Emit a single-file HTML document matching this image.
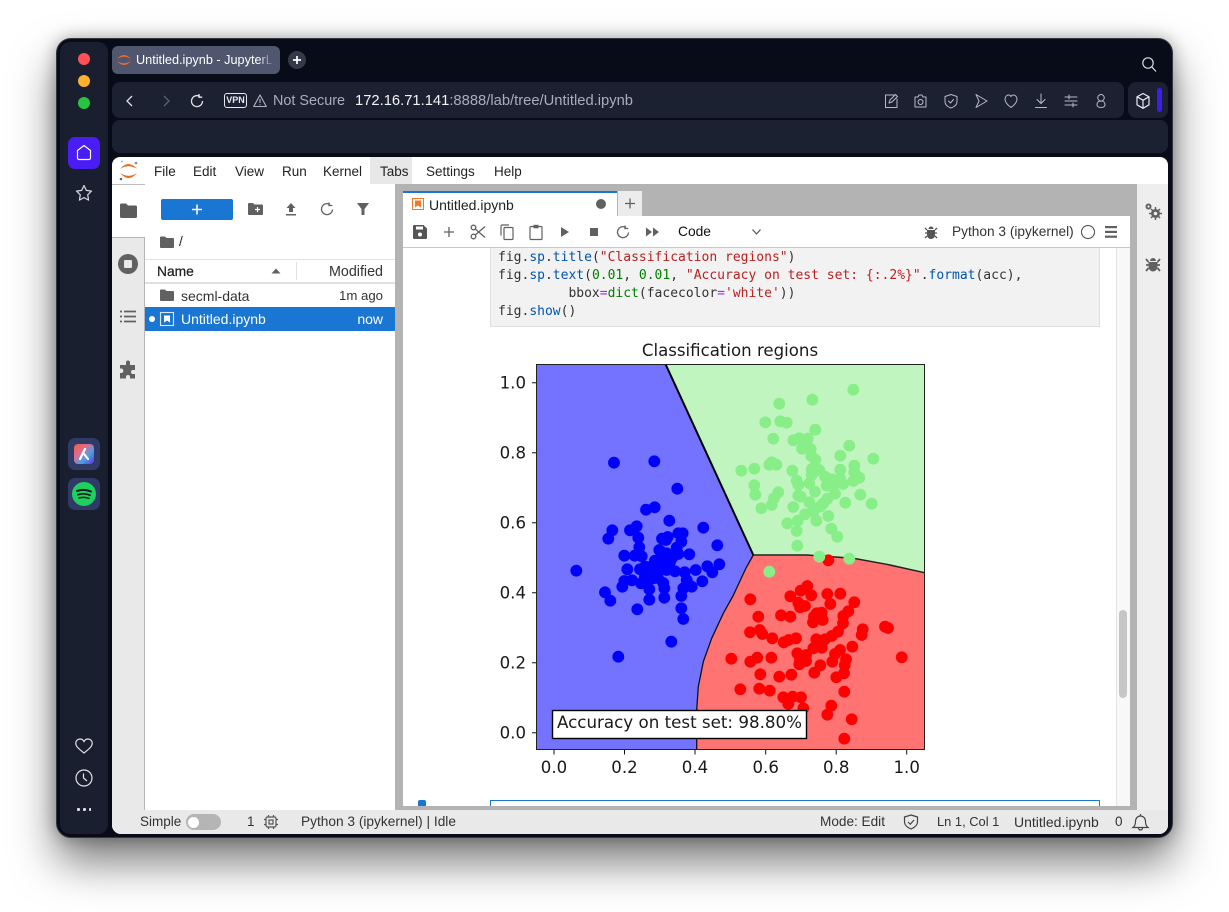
<!DOCTYPE html>
<html><head><meta charset="utf-8"><style>
html,body{margin:0;padding:0;width:1229px;height:912px;overflow:hidden;background:#fff}
*{box-sizing:border-box}
body{font-family:"Liberation Sans",sans-serif;font-size:13.5px;color:#222}
.a{position:absolute}
.t{position:absolute;white-space:nowrap;line-height:16px}
.ic{position:absolute;overflow:visible}
.code{position:absolute;left:498px;font:13px/18px "DejaVu Sans Mono",monospace;color:#333;white-space:pre}
.b{color:#0055aa}.s{color:#ba2121}.n{color:#008000}.p{color:#aa22ff}
</style></head><body>
<div class="a" style="left:56px;top:38px;width:1117px;height:800px;border-radius:15px;background:#080c18;box-shadow:0 24px 44px rgba(0,0,0,.52),0 0 16px rgba(0,0,0,.3);border:1px solid #33363d"></div>
<div class="a" style="left:60px;top:42px;width:48px;height:792px;border-radius:10px;background:#1a1f30"></div>
<div class="a" style="left:78px;top:53px;width:12px;height:12px;border-radius:50%;background:#ff5257"></div>
<div class="a" style="left:78px;top:75px;width:12px;height:12px;border-radius:50%;background:#feb02c"></div>
<div class="a" style="left:78px;top:97px;width:12px;height:12px;border-radius:50%;background:#27c53f"></div>
<div class="a" style="left:68px;top:137px;width:32px;height:32px;border-radius:7px;background:#4a1df5"></div>
<svg class="ic" style="left:68px;top:137px" width="32" height="32" fill="none" stroke="#fff" stroke-width="1.2" stroke-linejoin="round"><path d="M9.5 13.5 16 8.5l6.5 5v7.500a1.500 1.500 0 0 1-1.500 1.500h-10a1.500 1.500 0 0 1-1.500-1.500z"/></svg>
<svg class="ic" style="left:76px;top:185px" width="16" height="16" fill="none" stroke="#d8dae0" stroke-width="1.200" stroke-linejoin="round"><path d="M8 .5l2.300 4.900 5.200.7-3.800 3.700.9 5.300L8 12.600l-4.600 2.500.9-5.300L.5 6.100l5.200-.7z"/></svg>
<div class="a" style="left:68px;top:438px;width:32px;height:32px;border-radius:7px;background:#2f3a66"></div>
<div class="a" style="left:74px;top:444px;width:20px;height:20px;border-radius:4px;background:linear-gradient(135deg,#f0603a 0%,#e06a90 35%,#46a0e8 65%,#6a30d8 100%)"></div>
<svg class="ic" style="left:74px;top:444px" width="20" height="20" fill="none" stroke="#fff" stroke-width="2.200" stroke-linecap="round"><path d="M11 5 6 15M10 10l4 5"/></svg>
<div class="a" style="left:68px;top:478px;width:32px;height:32px;border-radius:7px;background:#2f3a66"></div>
<div class="a" style="left:72px;top:482px;width:24px;height:24px;border-radius:50%;background:#1ed05e"></div>
<svg class="ic" style="left:72px;top:482px" width="24" height="24" fill="none" stroke="#10201a" stroke-linecap="round"><path stroke-width="2" d="M5 9q7-2.500 14 .5"/><path stroke-width="1.700" d="M6 12.700q6-2 12 .5"/><path stroke-width="1.500" d="M7 16q5-1.500 10 .3"/></svg>
<svg class="ic" style="left:75px;top:738px" width="18" height="16" fill="none" stroke="#e2e4e8" stroke-width="1.200"><path d="M9 15C4 11 .8 8.500.8 5.200.8 2.700 2.800 1 5 1c1.700 0 3.200.9 4 2.500C9.800 1.900 11.300 1 13 1c2.200 0 4.200 1.700 4.200 4.200C17.200 8.500 14 11 9 15z"/></svg>
<svg class="ic" style="left:75px;top:769px" width="18" height="18" fill="none" stroke="#e2e4e8" stroke-width="1.200"><circle cx="9" cy="9" r="8"/><path d="M8.500 4.500V9l3.500 3"/></svg>
<div class="a" style="left:77px;top:808px;width:14px;height:3px;background:radial-gradient(circle at 1.500px 1.500px,#dde 1.500px,transparent 1.600px) 0 0/6px 3px"></div>

<div class="a" style="left:112px;top:46px;width:168px;height:28px;border-radius:6px;background:#51566f"></div>
<svg class="ic" style="left:116px;top:52px" width="16" height="16" fill="#ef6c2b"><path d="M1 7Q8-1 15 7Q8 2.500 1 7zM1 9Q8 17 15 9Q8 13.500 1 9z"/></svg>
<div class="t" style="left:136px;top:52px;width:137px;overflow:hidden;color:#fff;font-size:12.700px">Untitled.ipynb - JupyterLab</div>
<div class="a" style="left:258px;top:48px;width:16px;height:24px;background:linear-gradient(90deg,rgba(81,86,111,0),#51566f)"></div>
<div class="a" style="left:288px;top:51px;width:18px;height:18px;border-radius:50%;background:#353a4a"></div>
<svg class="ic" style="left:288px;top:51px" width="18" height="18" stroke="#fff" stroke-width="1.700"><path d="M5 9h8M9 5v8"/></svg>
<svg class="ic" style="left:1141px;top:56px" width="16" height="16" fill="none" stroke="#d8dae0" stroke-width="1.200"><circle cx="7" cy="7" r="5.200"/><path d="M10.800 10.800 15 15.500"/></svg>

<div class="a" style="left:112px;top:82px;width:1012px;height:36px;border-radius:8px;background:#1c2132"></div>
<div class="a" style="left:1128px;top:82px;width:40px;height:36px;border-radius:8px;background:#1c2132"></div>
<div class="a" style="left:112px;top:120px;width:1056px;height:33px;border-radius:8px;background:#1c2132"></div>
<svg class="ic" style="left:122px;top:93px" width="16" height="16" fill="none" stroke="#e0e2e8" stroke-width="1.300"><path d="M10 3 5 8l5 5"/></svg>
<svg class="ic" style="left:158px;top:93px" width="16" height="16" fill="none" stroke="#5a5f70" stroke-width="1.300"><path d="M6 3l5 5-5 5"/></svg>
<svg class="ic" style="left:189px;top:93px" width="16" height="16" fill="none" stroke="#e0e2e8" stroke-width="1.300"><path d="M13.500 8A5.500 5.500 0 1 1 11 3.500M10 1v3.200h3.200"/></svg>
<div class="a" style="left:224px;top:93px;width:23px;height:15px;border:1.200px solid #e8e9ee;border-radius:3px;color:#e8e9ee;font-size:9px;font-weight:bold;text-align:center;line-height:13px">VPN</div>
<svg class="ic" style="left:253px;top:94px" width="14" height="14" fill="none" stroke="#b0b4be" stroke-width="1.100" stroke-linejoin="round"><path d="M7 1 .7 12.500h12.600zM7 5v4M7 10.300v1"/></svg>
<div class="t" style="left:273px;top:93px;color:#a9adb8;font-size:14.400px">Not Secure</div>
<div class="t" style="left:355px;top:93px;color:#a9adb8;font-size:14.750px"><span style="color:#f2f3f5">172.16.71.141</span>:8888/lab/tree/Untitled.ipynb</div>
<svg class="ic" style="left:883px;top:92px" width="228" height="18" fill="none" stroke="#b8bbc6" stroke-width="1" stroke-linejoin="round" stroke-linecap="round">
<path d="M13 3H2.500v12.500H14V7M6 11l1-3 5.500-5.500 2 2L9 10z"/>
<path d="M32 5h3l1-2h3l1 2h3v10H32zM37.500 7.500a2.500 2.500 0 1 0 .1 0z"/>
<path d="M68 2.500l6 2v5c0 3.500-3 5.500-6 6.500-3-1-6-3-6-6.500v-5zM65.500 9l2 2 3-3.500"/>
<path d="M93 2.500 104 9l-11 6.500 3-6.500z"/>
<path d="M128 15.500c-3.500-2.500-6-5-6-8.500 0-2.500 2-4 3.700-4 1 0 1.800.5 2.300 1.500.5-1 1.300-1.500 2.300-1.500 1.700 0 3.700 1.500 3.700 4 0 3.500-2.500 6-6 8.500z"/>
<path d="M158 2v9M154 7.500l4 4 4-4M152.500 15.500h11"/>
<path d="M182 5h12M182 13h12M182 9h12M186 3v4M190 11v4"/>
<path d="M218 9a3 3 0 1 0 0-6.500 3 3 0 0 0 0 6.500zM218 9c-3 0-4 2-4 3.500 0 2 1.500 3 4 3s4-1 4-3C222 11 221 9 218 9z"/>
</svg>
<svg class="ic" style="left:1135px;top:92px" width="16" height="18" fill="none" stroke="#e8e9ee" stroke-width="1.200" stroke-linejoin="round"><path d="M8 1.500l6 3.300v8L8 16.300l-6-3.500v-8zM2 4.800l6 3.400 6-3.400M8 8.200v8"/></svg>
<div class="a" style="left:1157px;top:88px;width:5px;height:24px;border-radius:3px;background:#3d1cf0"></div>

<div class="a" style="left:112px;top:157px;width:1056px;height:677px;border-radius:8px 8px 9px 9px;background:#fff;overflow:hidden">
 <div class="a" style="left:0;top:26.500px;width:1056px;height:1px;background:#bdbdbd"></div>
 <div class="a" style="left:258px;top:0;width:42px;height:27px;background:#e8e8e8"></div>
 <div class="a" style="left:283px;top:27px;width:742px;height:626px;background:#b3b3b3"></div>
 <div class="a" style="left:1025px;top:27px;width:31px;height:626px;background:#eeeeee"></div>
 <div class="a" style="left:0;top:80px;width:33px;height:573px;background:#e9e9e9;border-top:1px solid #b5b5b5;border-right:1px solid #b5b5b5"></div>
 <div class="a" style="left:33px;top:27px;width:250px;height:626px;background:#fff"></div>
 <div class="a" style="left:0;top:653px;width:1056px;height:24px;background:#e9e9e9"></div>
</div>
<svg class="ic" style="left:116px;top:158px" width="24" height="25" fill="#ee6a24"><path d="M4 11Q12.500 1 21 11Q12.500 5.500 4 11zM4 15Q12.500 25 21 15Q12.500 20.500 4 15z"/><circle cx="20" cy="5" r="1.300" fill="#888"/><circle cx="5" cy="21" r="1.300" fill="#666"/><circle cx="6" cy="3.500" r=".9" fill="#999"/></svg>
<div class="t" style="left:154px;top:164px">File</div>
<div class="t" style="left:193px;top:164px">Edit</div>
<div class="t" style="left:235px;top:164px">View</div>
<div class="t" style="left:282px;top:164px">Run</div>
<div class="t" style="left:323px;top:164px">Kernel</div>
<div class="t" style="left:380px;top:164px">Tabs</div>
<div class="t" style="left:426px;top:164px">Settings</div>
<div class="t" style="left:494px;top:164px">Help</div>

<svg class="ic" style="left:120px;top:203px" width="17" height="15" fill="#5c5c5c"><path d="M0 2a1.500 1.500 0 0 1 1.500-1.500h4.500l2 2h7.500A1.500 1.500 0 0 1 17 4v9.500a1.500 1.500 0 0 1-1.500 1.500h-14A1.500 1.500 0 0 1 0 13.500z"/></svg>
<svg class="ic" style="left:118px;top:254px" width="20" height="20"><circle cx="10" cy="10" r="10" fill="#616161"/><rect x="6" y="6" width="8" height="8" rx="1" fill="#e9e9e9"/></svg>
<svg class="ic" style="left:120px;top:309px" width="16" height="15" fill="none" stroke="#616161" stroke-width="1.800"><path d="M4 2.500h12M4 7.500h12M4 12.500h12M0 2.500h2M0 7.500h2M0 12.500h2"/></svg>
<svg class="ic" style="left:119px;top:361px" width="18" height="18" fill="#616161"><path d="M7 1.500a2 2 0 0 1 4 0V4h5v5h-2a2 2 0 0 0 0 4h2v4.500H11V16a2 2 0 0 0-4 0v1.500H1V12h1.500a2.300 2.300 0 0 0 0-4.500H1V4h6z"/></svg>

<div class="a" style="left:161px;top:199px;width:72px;height:21px;border-radius:2px;background:#1976d2"></div>
<svg class="ic" style="left:161px;top:199px" width="72" height="21" stroke="#fff" stroke-width="1.500"><path d="M31 10.500h10M36 5.500v10"/></svg>
<svg class="ic" style="left:248px;top:202px" width="15" height="14" fill="#616161"><path d="M0 2a1 1 0 0 1 1-1h4l1.500 1.500H14a1 1 0 0 1 1 1V12a1 1 0 0 1-1 1H1a1 1 0 0 1-1-1z"/><path d="M7 7.500h5M9.500 5v5" stroke="#fff" stroke-width="1.200"/></svg>
<svg class="ic" style="left:285px;top:202px" width="12" height="14" fill="#616161"><path d="M6 1l4.500 5H8v4H4V6H1.500zM1 12h10v1.500H1z"/></svg>
<svg class="ic" style="left:320px;top:202px" width="14" height="14" fill="none" stroke="#616161" stroke-width="1.300"><path d="M12.500 7.500A5.500 5.500 0 1 1 10 2.500M9 0.500v3h3.300"/></svg>
<svg class="ic" style="left:357px;top:203px" width="12" height="12" fill="#616161"><path d="M0 0h12L7.500 6v6h-3V6z"/></svg>
<svg class="ic" style="left:160px;top:236px" width="14" height="12" fill="#616161"><path d="M0 1.500A1 1 0 0 1 1 .5h4l1.500 1.500H13a1 1 0 0 1 1 1V11a1 1 0 0 1-1 1H1a1 1 0 0 1-1-1z"/></svg>
<div class="t" style="left:179px;top:234px">/</div>
<div class="a" style="left:145px;top:259px;width:250px;height:1px;background:#e0e0e0"></div>
<div class="a" style="left:145px;top:282px;width:250px;height:2px;background:#e0e0e0"></div>
<div class="a" style="left:296px;top:262px;width:1px;height:18px;background:#e0e0e0"></div>
<div class="t" style="left:157px;top:264px;font-size:13.800px;color:#222;-webkit-text-stroke:.25px #222">Name</div>
<svg class="ic" style="left:271px;top:268px" width="10" height="6" fill="#616161"><path d="M5 .5l4.500 5H.5z"/></svg>
<div class="t" style="right:846px;top:264px;color:#333;font-size:14.300px">Modified</div>
<svg class="ic" style="left:160px;top:289px" width="14" height="12" fill="#616161"><path d="M0 1.500A1 1 0 0 1 1 .5h4l1.500 1.500H13a1 1 0 0 1 1 1V11a1 1 0 0 1-1 1H1a1 1 0 0 1-1-1z"/></svg>
<div class="t" style="left:181px;top:288px;color:#333;font-size:14px">secml-data</div>
<div class="t" style="right:846px;top:288px;color:#333;font-size:13.200px">1m ago</div>
<div class="a" style="left:145px;top:307px;width:250px;height:24px;background:#1976d2"></div>
<div class="a" style="left:149px;top:316px;width:6px;height:6px;border-radius:50%;background:#fff"></div>
<svg class="ic" style="left:160px;top:312px" width="14" height="14" fill="none" stroke="#d8e8f8" stroke-width="1.100"><rect x=".5" y=".5" width="13" height="13"/><path d="M4 3.500h6v7L7 8.500l-3 2z" fill="#fff" stroke="none"/></svg>
<div class="t" style="left:181px;top:311px;color:#fff;font-size:14px">Untitled.ipynb</div>
<div class="t" style="right:846px;top:311px;color:#fff;font-size:14px">now</div>

<div class="a" style="left:403px;top:191px;width:214px;height:25px;background:#fff;border-top:2px solid #1976d2"></div>
<svg class="ic" style="left:412px;top:198px" width="12" height="12" fill="none"><rect x=".5" y=".5" width="11" height="11" stroke="#f37726"/><path d="M3 2.500h6v7L6 7.500l-3 2z" fill="#f37726"/></svg>
<div class="t" style="left:429px;top:197px;font-size:14px">Untitled.ipynb</div>
<div class="a" style="left:596px;top:199px;width:10px;height:10px;border-radius:50%;background:#616161"></div>
<div class="a" style="left:618px;top:191px;width:24px;height:25px;background:#ececec"></div>
<svg class="ic" style="left:618px;top:191px" width="24" height="25" stroke="#616161" stroke-width="1.300"><path d="M7 12.500h10M12 7.500v10"/></svg>
<div class="a" style="left:403px;top:216px;width:727px;height:32px;background:#fff;border-bottom:1px solid #c8c8c8"></div>
<svg class="ic" style="left:413px;top:225px" width="14" height="14" fill="#555"><path d="M0 1a1 1 0 0 1 1-1h9.500L14 3.500V13a1 1 0 0 1-1 1H1a1 1 0 0 1-1-1z"/><rect x="3" y="1.500" width="7" height="3" fill="#fff"/><circle cx="7" cy="9.500" r="2" fill="#fff"/></svg>
<svg class="ic" style="left:442px;top:225px" width="14" height="14" stroke="#616161" stroke-width="1.300"><path d="M2 7h10M7 2v10"/></svg>
<svg class="ic" style="left:470px;top:224px" width="16" height="16" fill="none" stroke="#616161" stroke-width="1.300"><circle cx="3.500" cy="3.500" r="2.300"/><circle cx="3.500" cy="12.500" r="2.300"/><path d="M5.300 5 15 13.500M5.300 11 15 2.500"/></svg>
<svg class="ic" style="left:500px;top:224px" width="14" height="16" fill="none" stroke="#616161" stroke-width="1.200"><rect x="4" y="3.500" width="9" height="12" rx="1"/><path d="M1 11.500V2a1 1 0 0 1 1-1h7"/></svg>
<svg class="ic" style="left:529px;top:224px" width="14" height="16" fill="none" stroke="#616161" stroke-width="1.200"><rect x="1" y="2.500" width="12" height="13" rx="1"/><rect x="4.500" y=".8" width="5" height="3.500" fill="#616161" stroke="none"/></svg>
<svg class="ic" style="left:560px;top:226px" width="10" height="12" fill="#616161"><path d="M1 1l8 5-8 5z"/></svg>
<div class="a" style="left:590px;top:228px;width:8px;height:8px;background:#616161"></div>
<svg class="ic" style="left:616px;top:225px" width="14" height="14" fill="none" stroke="#616161" stroke-width="1.300"><path d="M12.500 7.500A5.500 5.500 0 1 1 10 2.500M9 .5v3h3.300"/></svg>
<svg class="ic" style="left:646px;top:227px" width="13" height="10" fill="#616161"><path d="M0 .5l6 4.500-6 4.500zM7 .5l6 4.500-6 4.500z"/></svg>
<div class="t" style="left:678px;top:224px;color:#111;font-size:13.800px">Code</div>
<svg class="ic" style="left:751px;top:228px" width="11" height="8" fill="none" stroke="#555" stroke-width="1.200"><path d="M1.500 1.500 5.500 6l4-4.500"/></svg>
<svg class="ic" style="left:925px;top:225px" width="12" height="14" fill="#555"><path d="M2 5h8v5a4 4 0 0 1-8 0zM3.500 4a2.500 2.500 0 0 1 5 0z"/><path d="M0 3l2 2M12 3l-2 2M0 8h2M10 8h2M0 13l2-2M12 13l-2-2" stroke="#555" stroke-width="1.300"/></svg>
<div class="t" style="left:952px;top:224px;color:#333;font-size:13.700px">Python 3 (ipykernel)</div>
<div class="a" style="left:1081px;top:225px;width:14px;height:14px;border-radius:50%;border:1.200px solid #444"></div>
<svg class="ic" style="left:1105px;top:226px" width="12" height="12" fill="#616161"><rect y="0" width="12" height="2.200"/><rect y="4.800" width="12" height="2.200"/><rect y="9.600" width="12" height="2.200"/></svg>

<div class="a" style="left:403px;top:248px;width:727px;height:558px;background:#fff;overflow:hidden">
 <div class="a" style="left:713px;top:0;width:14px;height:558px;background:#f8f8f8;border-left:1px solid #e4e4e4"></div>
 <div class="a" style="left:716px;top:362px;width:8px;height:88px;border-radius:4px;background:#c6c6c6"></div>
 <div class="a" style="left:87px;top:-2px;width:610px;height:81px;background:#f2f2f2;border:1px solid #dfdfdf"></div>
 <div class="a" style="left:87px;top:552px;width:610px;height:8px;background:#fff;border:1px solid #1976d2"></div>
 <div class="a" style="left:15px;top:552px;width:8px;height:8px;border-radius:2px;background:#1976d2"></div>
</div>
<div class="code" style="top:249px">fig.<span class="b">sp</span>.<span class="b">title</span>(<span class="s">"Classification regions"</span>)</div>
<div class="code" style="top:267px">fig.<span class="b">sp</span>.<span class="b">text</span>(<span class="n">0.01</span>, <span class="n">0.01</span>, <span class="s">"Accuracy on test set: {:.2%}"</span>.<span class="b">format</span>(acc),</div>
<div class="code" style="top:285px">         bbox<span class="p">=</span><span class="n">dict</span>(facecolor<span class="p">=</span><span class="s">'white'</span>))</div>
<div class="code" style="top:303px">fig.<span class="b">show</span>()</div>

<svg class="ic" style="left:0;top:0" width="1229" height="912">
<rect x="536.500" y="364.500" width="388" height="385" fill="#c0f5c0"/>
<path d="M536.500 364.500H665.700L753.300 555 746 568 733 596 723.300 613.300 711.700 638.300 703.300 661.700 698.300 686.700 696.700 710V749.500H536.500z" fill="#7373ff"/>
<path d="M753.300 555H806.700L853.300 558.300 886.700 564.300 924.500 572.700V749.500H696.700V710L698.300 686.700 703.300 661.700 711.700 638.300 723.300 613.300 733 596 746 568z" fill="#ff7373"/>
<path d="M665.700 364.500 753.300 555" fill="none" stroke="#000" stroke-width="2"/>
<path d="M753.300 555H806.700L853.300 558.300 886.700 564.300 924.500 572.700" fill="none" stroke="#222" stroke-width="1.500"/>
<path d="M753.300 555 746 568 733 596 723.300 613.300 711.700 638.300 703.300 661.700 698.300 686.700 696.700 710V749.500" fill="none" stroke="#111" stroke-width="1.300"/>
<g fill="none" stroke-width="11.800" stroke-linecap="round">
<path stroke="#00f" d="M614 462.700h.01M654.300 461.300h.01M677.300 488.700h.01M646 509.700h.01M654.700 507.300h.01M669.300 520.700h.01M703.300 527.700h.01M612.300 530.300h.01M608.300 538.700h.01M630 530.300h.01M636.700 526.300h.01M638.300 537.700h.01M639.300 547.300h.01M624.300 555.700h.01M634.700 555.700h.01M641.700 556.300h.01M662 538.700h.01M667.700 537h.01M666 540h.01M678.300 533.300h.01M682.700 533.300h.01M681.300 541.700h.01M676.700 547.700h.01M717.300 545.300h.01M689.300 554.300h.01M659.300 550h.01M666.700 553.300h.01M678.300 554h.01M655 560.700h.01M627.300 569.300h.01M576.300 570.700h.01M707.300 566.300h.01M719.300 564.300h.01M712.300 572.300h.01M695.700 570h.01M684.700 572.300h.01M675 571.300h.01M645 566.700h.01M640 569.300h.01M666.700 565h.01M660 570h.01M624.300 581h.01M632 580.300h.01M622.300 586.700h.01M605 592.300h.01M610.300 600.700h.01M637.300 609.300h.01M649.300 599.700h.01M664.300 597.700h.01M649.300 589.300h.01M641 583.300h.01M645 576.700h.01M660 550.700h.01M676.700 553.300h.01M666.700 570h.01M702.300 581.300h.01M691.700 586.700h.01M686.700 580h.01M683.300 588.300h.01M681.300 596h.01M681.300 608.300h.01M683.300 619h.01M671.300 641.700h.01M664.300 588.300h.01M663.300 583h.01M653.300 578.300h.01M648.300 580h.01M656.700 570h.01M650 573.300h.01M618.300 656.700h.01M670 562h.01M655 572h.01M645 572h.01M652 566h.01M663 560h.01M672 558h.01M658 578h.01"/>
<path stroke="#f00" d="M828.300 560.300h.01M750.300 599.300h.01M807.300 586h.01M800.700 590.700h.01M790.300 596.300h.01M811.300 595.300h.01M827.300 594h.01M840.300 593.700h.01M830.300 604h.01M854.300 602.300h.01M798.300 602.700h.01M805 606h.01M800 607.300h.01M848.300 611.300h.01M843.300 616h.01M843 623.300h.01M758.300 616.700h.01M781 615.300h.01M790.300 616.700h.01M816.700 613.300h.01M821.700 612.700h.01M814 616.700h.01M822.700 620h.01M813 622.300h.01M862.700 629.300h.01M861.700 635h.01M885 626.700h.01M888 628h.01M750 632.300h.01M759.700 630h.01M762.300 634h.01M772.300 638.300h.01M838 631.700h.01M831.700 636h.01M825 639.300h.01M816.300 639.300h.01M796 638.300h.01M788.700 640h.01M783.700 642.300h.01M852.300 646.700h.01M821.700 647.700h.01M813.300 648.300h.01M816.700 645h.01M840 650h.01M835 654h.01M797.300 653.300h.01M806 655h.01M846 659.300h.01M832.300 661.700h.01M800 660h.01M806 661h.01M799.300 664.300h.01M731.300 658.700h.01M750.300 661.700h.01M757.300 657.700h.01M771.300 657.700h.01M901.700 657.300h.01M820.300 665.300h.01M814.300 672.700h.01M844.700 665h.01M844 673.300h.01M836.300 677.300h.01M760.300 674.300h.01M779.300 676.700h.01M791.300 674.700h.01M740.300 689.300h.01M759.300 688.700h.01M769.700 690.700h.01M844.300 691.700h.01M783.300 697.300h.01M792.700 696.700h.01M801 697.300h.01M788.300 704h.01M803.300 708.300h.01M831.300 705.700h.01M827.300 714.700h.01M851.700 719.300h.01M844.300 738.700h.01"/>
<path stroke="#88ee88" d="M853.300 389.700h.01M812.300 399.700h.01M779.300 403.700h.01M765.300 422.300h.01M780.300 421.300h.01M786.700 422.700h.01M815.300 429.700h.01M773.300 438.700h.01M793.300 440.300h.01M799.300 438.300h.01M807.700 438.700h.01M802 448.700h.01M810.700 449h.01M849.300 445.700h.01M840.300 455.700h.01M873.300 458.700h.01M811.300 456h.01M815.300 459.700h.01M771.700 462.300h.01M769.300 464.700h.01M776.300 464.700h.01M741.300 470.700h.01M754.300 468.700h.01M792.300 470.700h.01M854.300 465.700h.01M840.300 469.700h.01M854.300 472h.01M811.700 469.300h.01M819.300 470h.01M811.700 475h.01M825 476.700h.01M831.700 479.300h.01M840 478.300h.01M859.300 477.700h.01M853.300 481h.01M843 484h.01M826.700 485.700h.01M835 483.300h.01M796.700 480.700h.01M798.300 485h.01M809.300 483.300h.01M754.300 485.300h.01M755.300 494.700h.01M815 491.700h.01M778.300 492.300h.01M774 498.300h.01M771.700 505h.01M798.300 495.700h.01M800.700 496.700h.01M835 493.700h.01M860.300 494.700h.01M827.300 498.700h.01M823.300 503.300h.01M809.300 502.300h.01M845.300 502.700h.01M871.700 503.700h.01M761.300 508.300h.01M793.300 507h.01M820 506.700h.01M828.300 516h.01M805 514.300h.01M797.700 520.700h.01M787.300 523.300h.01M816.300 520.700h.01M813.300 511.700h.01M796.700 531h.01M831.300 528.700h.01M837.300 536.700h.01M797.300 545.700h.01M819.300 556.700h.01M849.300 558.700h.01M769.300 571.700h.01"/>
</g>
<rect x="552.500" y="710.500" width="254" height="28" fill="#fff" stroke="#000" stroke-width="1.400"/>
<rect x="536.500" y="364.500" width="388" height="385" fill="none" stroke="#222" stroke-width="1"/>
<path d="M532 382.700h4.500M532 452.700h4.500M532 522.700h4.500M532 592.700h4.500M532 662.700h4.500M532 732.700h4.500M554 750v4.500M624.500 750v4.500M695 750v4.500M765.700 750v4.500M836.200 750v4.500M906.700 750v4.500" stroke="#111" stroke-width="1"/>
<g font-family="'DejaVu Sans',sans-serif" font-size="16.600" fill="#1a1a1a">
<text x="526" y="388.700" text-anchor="end">1.0</text>
<text x="526" y="458.700" text-anchor="end">0.8</text>
<text x="526" y="528.700" text-anchor="end">0.6</text>
<text x="526" y="598.700" text-anchor="end">0.4</text>
<text x="526" y="668.700" text-anchor="end">0.2</text>
<text x="526" y="738.700" text-anchor="end">0.0</text>
<text x="554" y="773" text-anchor="middle">0.0</text>
<text x="624.500" y="773" text-anchor="middle">0.2</text>
<text x="695" y="773" text-anchor="middle">0.4</text>
<text x="765.700" y="773" text-anchor="middle">0.6</text>
<text x="836.200" y="773" text-anchor="middle">0.8</text>
<text x="906.700" y="773" text-anchor="middle">1.0</text>
<text x="557" y="728" font-size="16.700">Accuracy on test set: 98.80%</text>
<text x="730" y="356" text-anchor="middle" font-size="16.600">Classification regions</text>
</g>
</svg>

<svg class="ic" style="left:1144px;top:202px" width="18" height="18" fill="#616161"><circle cx="4.500" cy="4.500" r="3"/><circle cx="4.500" cy="4.500" r="1.100" fill="#eee"/><circle cx="11.500" cy="11.500" r="4.500"/><path d="M11.500 5v13M5 11.500h13M7 7l9 9M16 7l-9 9" stroke="#616161" stroke-width="1.500"/><circle cx="11.500" cy="11.500" r="1.800" fill="#eee"/></svg>
<svg class="ic" style="left:1146px;top:256px" width="14" height="16" fill="#616161"><path d="M2.500 6h9v5a4.500 4.500 0 0 1-9 0zM4 5a3 3 0 0 1 6 0z"/><path d="M0 3l2.500 3M14 3l-2.500 3M0 9h2.500M11.500 9H14M0 15l2.500-3M14 15l-2.500-3" stroke="#616161" stroke-width="1.800"/></svg>

<div class="t" style="left:140px;top:814px;color:#333">Simple</div>
<div class="a" style="left:186px;top:814px;width:35px;height:16px;border-radius:8px;background:#b5b5b5"></div>
<div class="a" style="left:188px;top:817px;width:11px;height:11px;border-radius:50%;background:#fff"></div>
<div class="t" style="left:247px;top:814px;color:#333">1</div>
<svg class="ic" style="left:264px;top:815px" width="14" height="14" fill="none" stroke="#555" stroke-width="1.200"><rect x="2" y="2" width="10" height="10" rx="1.500"/><rect x="5" y="5" width="4" height="4"/><path d="M4.500 0v2M9.500 0v2M4.500 12v2M9.500 12v2M0 4.500h2M0 9.500h2M12 4.500h2M12 9.500h2"/></svg>
<div class="t" style="left:301px;top:814px;color:#333;font-size:13.700px">Python 3 (ipykernel) | Idle</div>
<div class="t" style="left:820px;top:814px;color:#333;font-size:13.600px">Mode: Edit</div>
<svg class="ic" style="left:903px;top:814px" width="16" height="16" fill="none" stroke="#444" stroke-width="1.200"><path d="M8 1l6.500 2v5c0 3.500-3 5.500-6.500 7C4.500 13.500 1.500 11.500 1.500 8V3zM5 8l2.300 2.300L11 6"/></svg>
<div class="t" style="left:937px;top:814px;color:#333;font-size:12.900px">Ln 1, Col 1</div>
<div class="t" style="left:1014px;top:814px;color:#333;font-size:14px">Untitled.ipynb</div>
<div class="t" style="left:1115px;top:814px;color:#333">0</div>
<svg class="ic" style="left:1132px;top:813px" width="17" height="18" fill="none" stroke="#444" stroke-width="1.200"><path d="M1 14.500c2-1.500 2.500-3 2.500-6 0-3 2-5.500 5-5.500s5 2.500 5 5.500c0 3 .5 4.500 2.500 6zM8.500 3V1M6.500 15a2 2 0 0 0 4 0"/></svg>
</body></html>
